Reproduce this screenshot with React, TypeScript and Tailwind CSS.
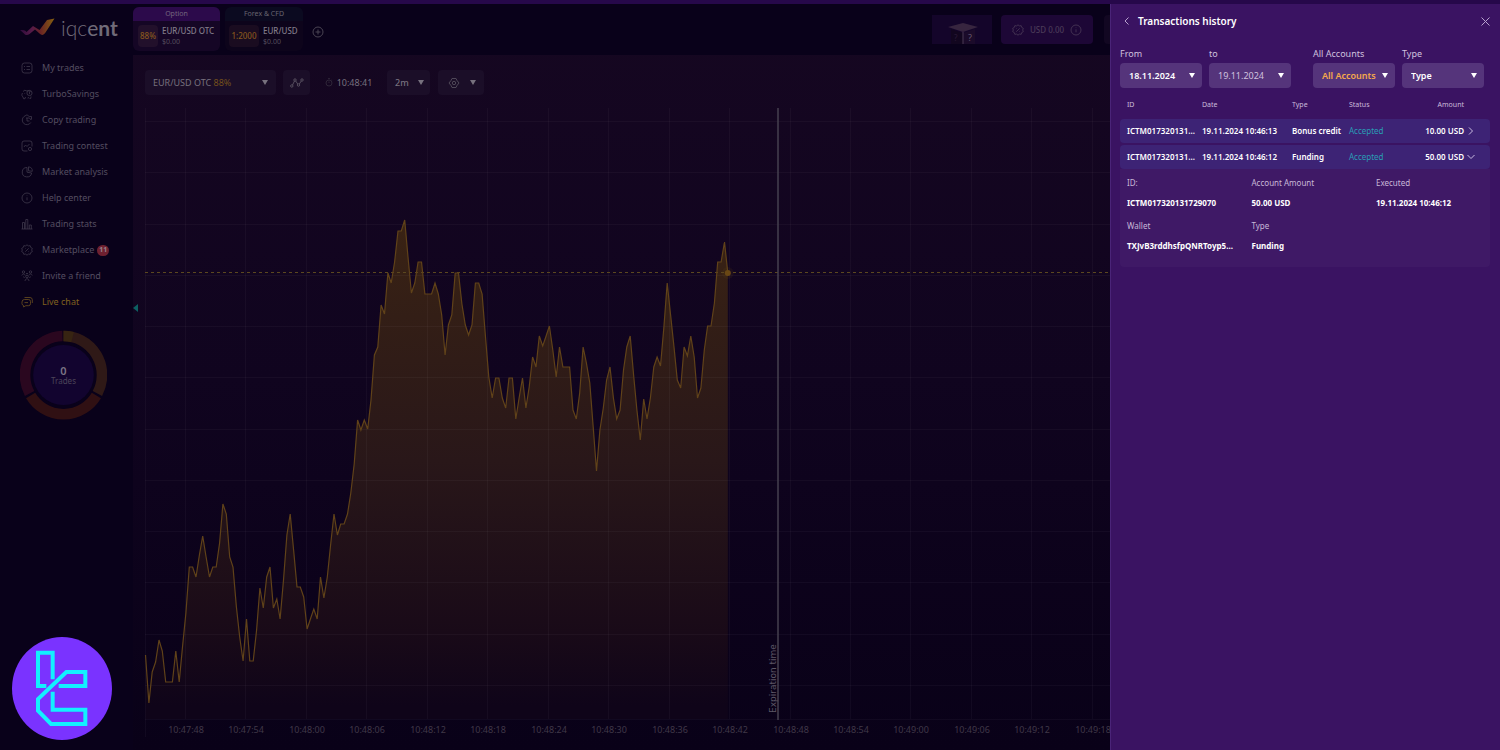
import type { ReactNode } from 'react';

const MENU = [
  { label: 'My trades', icon: 'list' },
  { label: 'TurboSavings', icon: 'piggy' },
  { label: 'Copy trading', icon: 'copy' },
  { label: 'Trading contest', icon: 'contest' },
  { label: 'Market analysis', icon: 'pie' },
  { label: 'Help center', icon: 'info' },
  { label: 'Trading stats', icon: 'bars' },
  { label: 'Marketplace', icon: 'gear', badge: 11 },
  { label: 'Invite a friend', icon: 'friends' },
  { label: 'Live chat', icon: 'chat', active: true },
];

const ICONS: Record<string, ReactNode> = {
  list: (
    <>
      <rect x="1" y="1" width="10" height="10" rx="2.5" />
      <path d="M3 4.500h1M5.500 4.500H9M3 7.500h1M5.500 7.500H9" />
    </>
  ),
  piggy: (
    <>
      <path d="M2 3.500 4 2l1 1c2-.8 4-.3 5 1.200M1.500 5c-1 1.500-.8 3 .5 4l.5 1.700H4L4.500 9" />
      <circle cx="8.500" cy="5" r="2.600" />
      <path d="M8.500 3.800v2.400M7 10.500l.5-1.500M10 8.500l-.3 2H8.500M3.500 5.500h.6" />
    </>
  ),
  copy: (
    <>
      <path d="M3 2.500 6 .8l2.200 1.700h2.300v3M9.800 8.500A4.600 4.600 0 1 1 3 2.500" />
      <path d="M5 4h3.500L10 6M6 4v3h2.500" />
    </>
  ),
  contest: (
    <>
      <path d="M11 6.500V3a2 2 0 0 0-2-2H3a2 2 0 0 0-2 2v6a2 2 0 0 0 2 2h3.500" />
      <path d="m3 7 1.500-2L6 6.500 8.500 4" />
      <circle cx="9" cy="9" r="1.600" />
    </>
  ),
  pie: (
    <>
      <path d="M6 1.500A4.700 4.700 0 1 0 10.600 7L6 6.200z" />
      <path d="M7.500.8a4.300 4.300 0 0 1 3.800 4.500l-3.800-.5z" />
    </>
  ),
  info: (
    <>
      <circle cx="6" cy="6" r="5" />
      <path d="M6 5.300v3M6 3.500v.6" />
    </>
  ),
  bars: <path d="M.5 11h11M1.500 11V4.500h2V11M4.800 11V1.500h2V11M8.300 11V7h2v4" />,
  gear: (
    <>
      <path d="m6 .8 1.400 1.100 1.800-.2.500 1.700 1.600.9L10.700 6l.6 1.700-1.600.9-.5 1.700-1.800-.2L6 11.200l-1.400-1.100-1.800.2-.5-1.700-1.600-.9L1.300 6 .7 4.300l1.600-.9.5-1.700 1.800.2z" />
      <path d="m4.300 7.700 3.400-3.400M4.300 4.500h.5M7.300 7.500h.5" />
    </>
  ),
  friends: (
    <>
      <circle cx="2.500" cy="2" r="1.200" />
      <circle cx="9.500" cy="2" r="1.200" />
      <circle cx="6" cy="6.500" r="1.300" />
      <path d="M.8 5.500c.5-2 3-2 3.400 0M7.800 5.500c.5-2 3-2 3.400 0M4 11c.3-3 3.700-3 4 0M5 3.500h2M3.500 8l-1-1.500M8.500 8l1-1.500" />
    </>
  ),
  chat: (
    <>
      <path d="M3.500 3.500h4a2 2 0 0 1 2 2v2.200a2 2 0 0 1-2 2H4.800L2.600 11V9.500A2 2 0 0 1 1 7.700V6a2.500 2.500 0 0 1 2.500-2.500z" />
      <path d="M3.500 1.500H9a2.400 2.400 0 0 1 2.300 2.400V7M3.500 6.600h3.500" />
    </>
  ),
};

// y position of every tick, one tick per STEP pixels
const TICKS = [
  655, 703, 672, 662, 640, 651, 682, 682, 682, 651, 682, 647, 613, 567, 567, 577, 555, 536, 557, 577,
  567, 567, 543, 504, 514, 557, 567, 607, 637, 661, 619, 661, 661, 630, 588, 608, 577, 567, 608, 599,
  619, 580, 535, 514, 550, 587, 587, 597, 629, 619, 609, 619, 577, 598, 577, 545, 514, 535, 524, 524,
  514, 493, 464, 420, 430, 420, 429, 400, 355, 347, 305, 314, 273, 283, 262, 231, 231, 220, 257, 293,
  283, 262, 262, 294, 294, 294, 283, 294, 315, 355, 325, 315, 273, 273, 304, 325, 335, 325, 283, 283,
  294, 337, 377, 398, 378, 378, 398, 408, 378, 378, 419, 398, 378, 408, 387, 357, 367, 336, 346, 336,
  326, 350, 377, 347, 367, 367, 367, 410, 419, 393, 347, 363, 383, 427, 471, 430, 408, 380, 367, 398,
  419, 410, 370, 347, 336, 375, 410, 440, 399, 419, 398, 367, 357, 366, 327, 283, 315, 347, 380, 388,
  347, 356, 336, 357, 398, 388, 350, 326, 326, 303, 262, 262, 242, 273,
];
const STEP = 3.366;
const LEFT = 12.5;
const TOP = 106;

const TIMES = [
  '10:47:48', '10:47:54', '10:48:00', '10:48:06', '10:48:12', '10:48:18', '10:48:24', '10:48:30',
  '10:48:36', '10:48:42', '10:48:48', '10:48:54', '10:49:00', '10:49:06', '10:49:12', '10:49:18',
];

const TRANSACTIONS = [
  { id: 'ICTM017320131729071', date: '19.11.2024 10:46:13', type: 'Bonus credit', status: 'Accepted', amount: '10.00 USD' },
  { id: 'ICTM017320131729070', date: '19.11.2024 10:46:12', type: 'Funding', status: 'Accepted', amount: '50.00 USD', open: true },
];

const DETAILS = [
  { label: 'ID:', value: 'ICTM017320131729070' },
  { label: 'Account Amount', value: '50.00 USD' },
  { label: 'Executed', value: '19.11.2024 10:46:12' },
  { label: 'Wallet', value: 'TXJvB3rddhsfpQNRToyp5...' },
  { label: 'Type', value: 'Funding' },
];

function Icon({ name, className = 'size-3' }: { name: string; className?: string }) {
  return (
    <svg viewBox="0 0 12 12" className={className} fill="none" stroke="currentColor" strokeWidth="0.8" strokeLinejoin="round">
      {ICONS[name]}
    </svg>
  );
}

function Caret() {
  return (
    <svg viewBox="0 0 6 5" className="h-[5px] w-1.5 shrink-0" fill="currentColor">
      <path d="M0 0h6L3 5z" />
    </svg>
  );
}

function Logo() {
  return (
    <a href="#" className="flex h-6 items-center pl-5" aria-label="iqcent">
      <svg viewBox="0 0 36 20" className="h-5 w-9">
        <defs>
          <linearGradient id="logo" x1="0" x2="1">
            <stop offset="0" stopColor="#2e0b3c" />
            <stop offset="0.35" stopColor="#571a48" />
            <stop offset="0.6" stopColor="#6a2424" />
            <stop offset="1" stopColor="#86610f" />
          </linearGradient>
        </defs>
        <path d="M0 12c3 0 5 0 6.500 2L13 8l6.500 4L27 2l7.500-1.500-9 14c-2 3-4 3-6 1l-4.500-4-5.500 4.500c-2 1.500-4 1.500-5.500-.5z" fill="url(#logo)" />
      </svg>
      <span className="ml-[5px] font-[Lato,sans-serif] text-[21px] leading-6 font-light text-[#706a78]">
        iqc<span className="font-normal">e</span><span className="font-bold">nt</span>
      </span>
    </a>
  );
}

function TradesDonut() {
  return (
    <div className="relative mt-[15px] ml-5 h-[90px] w-[87px]">
      <svg viewBox="0 0 86 90" preserveAspectRatio="none" className="size-full" fill="none">
        <circle cx="43" cy="45" r="30" fill="#12042f" />
        <g strokeWidth="10.500">
          <path d="M43 6A38 39 0 0 1 76.500 63.500" stroke="#2f1917" />
          <path d="M43 6A38 39 0 0 1 52 7.200" stroke="#372412" />
          <path d="M75.500 65.500A38 39 0 0 1 10.500 65.500" stroke="#301013" />
          <path d="M9.500 63.500A38 39 0 0 1 42 6" stroke="#2a071f" />
        </g>
      </svg>
      <div className="absolute inset-0 flex flex-col items-center justify-center">
        <span className="text-[11px] leading-3 font-semibold text-[#7b7585]">0</span>
        <span className="text-[8px] leading-2 text-[#4d4559]">Trades</span>
      </div>
    </div>
  );
}

function Sidebar() {
  return (
    <aside className="w-[133px] shrink-0 bg-[#09011a] pt-3">
      <Logo />
      <nav className="mt-[15px]">
        {MENU.map(item => (
          <a
            key={item.label}
            href="#"
            className={`flex h-[26px] items-center pl-[21px] text-[9px] ${item.active ? 'text-[#80601f]' : 'text-[#544d60]'}`}
          >
            <Icon name={item.icon} className={item.active ? 'size-3 text-[#6b4f20]' : 'size-3 text-[#3f384b]'} />
            <span className="ml-[9px]">{item.label}</span>
            {item.badge && (
              <span className="ml-[3px] flex h-[11px] w-3 items-center justify-center rounded-full bg-[#6e2030] text-[7px] font-bold text-[#94808c]">
                {item.badge}
              </span>
            )}
          </a>
        ))}
      </nav>
      <TradesDonut />
    </aside>
  );
}

function Header() {
  return (
    <header className="flex h-[51px] bg-[#09011a] pt-[3px]">
      <button className="h-11 w-[87px] overflow-hidden rounded-md bg-[#150625] text-left">
        <span className="block h-3.5 bg-[#2c0a4b] text-center text-[7px] leading-[13px] text-[#75667f]">Option</span>
        <span className="flex h-[30px] items-center pl-[5px]">
          <span className="flex h-[22px] w-5 items-center justify-center rounded bg-[#22102b] text-[8px] font-medium text-[#87571d]">88%</span>
          <span className="ml-1 whitespace-nowrap">
            <span className="block text-[8px] leading-3 font-medium text-[#817b89]">EUR/USD OTC</span>
            <span className="block text-[7px] leading-[10px] text-[#554e5e]">$0.00</span>
          </span>
        </span>
      </button>
      <button className="ml-[5px] h-11 w-[78px] overflow-hidden rounded-md bg-[#0d041b] text-left">
        <span className="block h-3.5 bg-[#0b0a20] text-center text-[7px] leading-[13px] text-[#68646f]">Forex &amp; CFD</span>
        <span className="flex h-[30px] items-center pl-1">
          <span className="flex h-[22px] w-[30px] items-center justify-center rounded bg-[#1a0c20] text-[8px] font-medium text-[#87571d]">1:2000</span>
          <span className="ml-1 whitespace-nowrap">
            <span className="block text-[8px] leading-3 font-medium text-[#817b89]">EUR/USD</span>
            <span className="block text-[7px] leading-[10px] text-[#554e5e]">$0.00</span>
          </span>
        </span>
      </button>
      <button aria-label="Add asset" className="ml-[9px] h-[50px] text-[#4a4453]">
        <svg viewBox="0 0 12 12" className="size-3" fill="none" stroke="currentColor">
          <circle cx="6" cy="6" r="5" />
          <path d="M6 3.500v5M3.500 6h5" />
        </svg>
      </button>
      <div className="ml-auto flex pt-2">
        <button aria-label="Mystery box" className="h-[29px] w-[60px] bg-[#14052a]">
          <svg viewBox="0 0 60 29" className="h-[29px] w-[60px]">
            <path d="M16 12 31 8l15 4-15 5z" fill="#37253f" />
            <path d="M19 14l12 4v11H19z" fill="#12061f" />
            <path d="M31 18l12-4v15H31z" fill="#1b0b2a" />
            <path d="M31 17v12" stroke="#4b3a54" />
            <text x="36" y="26" fontSize="9" fill="#66566f">?</text>
            <text x="22" y="26" fontSize="8" fill="#2b1a36">?</text>
          </svg>
        </button>
        <button className="ml-[9px] flex h-[29px] w-[92px] items-center justify-between rounded bg-[#1d0736] px-[11px] text-[8px] font-medium text-[#4b3b58]">
          <Icon name="gear" />
          USD 0.00
          <Icon name="info" />
        </button>
        <div className="ml-[11px] h-[29px] w-1.5 rounded-l bg-[#120722]" />
      </div>
    </header>
  );
}

function Toolbar() {
  const box = 'flex h-[25px] items-center rounded bg-[#1b0e28]';
  return (
    <div className="flex h-[51px] items-center pt-1 pl-3 text-[9px] text-[#77717e]">
      <button className={`${box} w-[131px] justify-between px-2`}>
        <span>EUR/USD OTC <span className="text-[#73501c]">88%</span></span>
        <Caret />
      </button>
      <button aria-label="Indicators" className={`${box} ml-[7px] w-[27px] justify-center text-[#5b5463]`}>
        <svg viewBox="0 0 14 10" className="h-2.5 w-3.5" fill="none" stroke="currentColor" strokeWidth="0.900">
          <circle cx="1.800" cy="8" r="1.200" />
          <circle cx="5" cy="2" r="1.200" />
          <circle cx="8.500" cy="7" r="1.200" />
          <circle cx="12" cy="2" r="1.200" />
          <path d="m2.500 7 2-4M5.700 3l2 3M9.300 6l2-3" />
        </svg>
      </button>
      <div className="flex w-[77px] items-center justify-center gap-1">
        <svg viewBox="0 0 8 9" className="h-[9px] w-2 text-[#352d3e]" fill="none" stroke="currentColor" strokeWidth="0.800">
          <circle cx="4" cy="5" r="3" />
          <path d="M3 .6h2M4 3.500V5M6.500 2l.7.600" />
        </svg>
        10:48:41
      </div>
      <label className={`${box} relative w-[43px]`}>
        <select aria-label="Timeframe" className="h-full w-full appearance-none pl-2 font-medium outline-none">
          <option>2m</option>
        </select>
        <span className="pointer-events-none absolute right-1.5"><Caret /></span>
      </label>
      <button aria-label="Chart settings" className={`${box} ml-2 w-[46px] justify-between pr-2 pl-2.5`}>
        <svg viewBox="0 0 12 12" className="size-3" fill="none" stroke="#554e5c" strokeWidth="0.900">
          <path d="M4 1.500h4L9 3.500 11 6 9 8.500l-1 2H4l-1-2L1 6l2-2.500z" />
          <circle cx="6" cy="6" r="1.700" />
        </svg>
        <Caret />
      </button>
    </div>
  );
}

function Chart() {
  const line = TICKS.map((y, i) => `${(LEFT + i * STEP).toFixed(1)},${y - TOP}`).join(' ');
  const end = LEFT + (TICKS.length - 1) * STEP;

  return (
    <svg viewBox="0 0 977 644" preserveAspectRatio="xMinYMin slice" className="block h-[644px] w-full">
      <defs>
        <linearGradient id="area" gradientUnits="userSpaceOnUse" x1="0" y1="110" x2="0" y2="600">
          <stop offset="0" stopColor="#3a2314" />
          <stop offset="0.500" stopColor="#291719" />
          <stop offset="0.850" stopColor="#190a18" />
          <stop offset="1" stopColor="#0f0419" />
        </linearGradient>
      </defs>
      <polygon points={`${LEFT},613 ${line} ${end},613`} fill="url(#area)" />
      <g stroke="#ffffff" strokeOpacity="0.035">
        {Array.from({ length: 12 }, (_, i) => (
          <path key={i} d={`M12 ${15.5 + Math.round(i * 51.25)}H977`} />
        ))}
        {TIMES.map((t, i) => (
          <path key={t} d={`M${53 + Math.round(i * 60.45) - 0.5} 2V613`} />
        ))}
        <path d="M12.500 2V631M12 613.500H977" />
      </g>
      <path d="M12 166.500H977" stroke="#5b471f" strokeDasharray="3 3" />
      <polyline points={line} fill="none" stroke="#604219" strokeWidth="1.200" />
      <circle cx={end} cy="167" r="6" fill="#5e4016" fillOpacity="0.150" />
      <circle cx={end} cy="167" r="3" fill="#694714" />
      <path d="M645 2V614" stroke="#46404f" strokeWidth="1.500" />
      <text transform="translate(643 607) rotate(-90)" fontSize="9" fill="#5d5766" className="font-['DejaVu_Sans',sans-serif]">
        Expiration time
      </text>
      <g fontSize="9" fill="#403848" textAnchor="middle">
        {TIMES.map((t, i) => (
          <text key={t} x={53 + Math.round(i * 60.45)} y="627">{t}</text>
        ))}
      </g>
    </svg>
  );
}

interface FieldProps {
  label: string;
  value: string;
  className?: string;
}

function Field({ label, value, className = 'text-white font-semibold' }: FieldProps) {
  return (
    <label className="block w-[82px] text-[9px] text-[#d0c1df]">
      <span className="block leading-[18px]">{label}</span>
      <span className="relative flex h-[25px] items-center rounded bg-[#55347b] text-white">
        <select className={`h-full w-full appearance-none pl-[9px] outline-none ${className}`}>
          <option>{value}</option>
        </select>
        <span className="pointer-events-none absolute right-[7px]"><Caret /></span>
      </span>
    </label>
  );
}

function HistoryPanel() {
  return (
    <section className="w-[390px] shrink-0 border-l border-[#4a2478] bg-[#3a1362] pr-2.5 pl-[9px]">
      <div className="flex h-[34px] items-center">
        <button aria-label="Back" className="ml-1 text-[#b7a1cd]">
          <svg viewBox="0 0 5 8" className="h-2 w-[5px]" fill="none" stroke="currentColor"><path d="M4.500.5 1 4l3.500 3.500" /></svg>
        </button>
        <h2 className="ml-[9px] text-[10px] font-semibold text-white">Transactions history</h2>
        <button aria-label="Close" className="ml-auto text-[#b7a1cd]">
          <svg viewBox="0 0 9 9" className="size-[9px]" fill="none" stroke="currentColor"><path d="m.5.5 8 8m0-8-8 8" /></svg>
        </button>
      </div>

      <div className="mt-[7px] flex gap-[7px] pr-1.5">
        <Field label="From" value="18.11.2024" />
        <Field label="to" value="19.11.2024" className="text-[#d0c1df]" />
        <div className="flex-1" />
        <Field label="All Accounts" value="All Accounts" className="font-semibold text-[#f5a94b]" />
        <Field label="Type" value="Type" />
      </div>

      <table className="mt-1 w-full table-fixed border-separate border-spacing-x-0 border-spacing-y-0.5 text-left text-[8px]">
        <thead>
          <tr className="h-[23px] text-[7px] text-[#cbbcdb] [&>th]:font-normal">
            <th className="w-[82px] pl-[7px]">ID</th>
            <th className="w-[90px]">Date</th>
            <th className="w-[57px]">Type</th>
            <th>Status</th>
            <th className="w-[54px] text-right">Amount</th>
            <th className="w-[26px]" aria-label="Toggle" />
          </tr>
        </thead>
        <tbody>
          {TRANSACTIONS.map(tx => (
            <tr key={tx.id} className="h-6 whitespace-nowrap text-white [&>td]:bg-[#3d2375] [&>td]:font-semibold">
              <td className="rounded-l pl-[7px]">{tx.id.slice(0, 13)}...</td>
              <td>{tx.date}</td>
              <td>{tx.type}</td>
              <td className="text-[#2a9db5] [&]:!font-normal">{tx.status}</td>
              <td className="text-right">{tx.amount}</td>
              <td className="rounded-r pl-[3px]">
                <button aria-label="Toggle details" className="flex size-2 items-center justify-center">
                  <svg viewBox="0 0 8 8" className={tx.open ? 'size-2 rotate-90' : 'size-2'} fill="none" stroke="#c9bbe0">
                    <path d="m2 .5 3.500 3.500L2 7.500" />
                  </svg>
                </button>
              </td>
            </tr>
          ))}
        </tbody>
      </table>
      <dl className="-mt-0.5 grid h-[98px] grid-cols-[1fr_1fr_114px] content-start rounded-b bg-[#3f1966] pt-1 pl-[7px]">
        {DETAILS.map(d => (
          <div key={d.label} className="h-[43px] text-[8px] leading-5">
            <dt className="text-[#c8b8d8]">{d.label}</dt>
            <dd className="font-bold text-white">{d.value}</dd>
          </div>
        ))}
      </dl>
    </section>
  );
}

function Watermark() {
  return (
    <svg viewBox="0 0 300 309" preserveAspectRatio="none" className="absolute bottom-2.5 left-3 h-[103px] w-[100px]">
      <ellipse cx="150" cy="154.500" rx="150" ry="154.500" fill="#7a33ff" />
      <g fill="none" stroke="#12f0ff" strokeWidth="12">
        <path d="M103 147H78V47h44v80" />
        <path d="M122 164v54h98v43H117l-39-40v-35l85-81h57v42h-80" />
      </g>
    </svg>
  );
}

export default function App() {
  return (
    <div className="relative flex min-h-screen flex-col overflow-hidden bg-[#09011a] font-['Noto_Sans',sans-serif]">
      <div className="h-1 bg-[#26084a]" />
      <div className="flex flex-1">
        <Sidebar />
        <main className="relative min-w-0 flex-1 overflow-hidden bg-linear-to-b from-[#160721] via-[#10041f] to-[#090118]">
          <Header />
          <Toolbar />
          <Chart />
          <span className="absolute top-[300px] left-0">
            <svg viewBox="0 0 5 8" className="h-2 w-[5px]"><path d="M5 0v8L0 4z" fill="#0d5f62" /></svg>
          </span>
        </main>
        <HistoryPanel />
      </div>
      <Watermark />
    </div>
  );
}
